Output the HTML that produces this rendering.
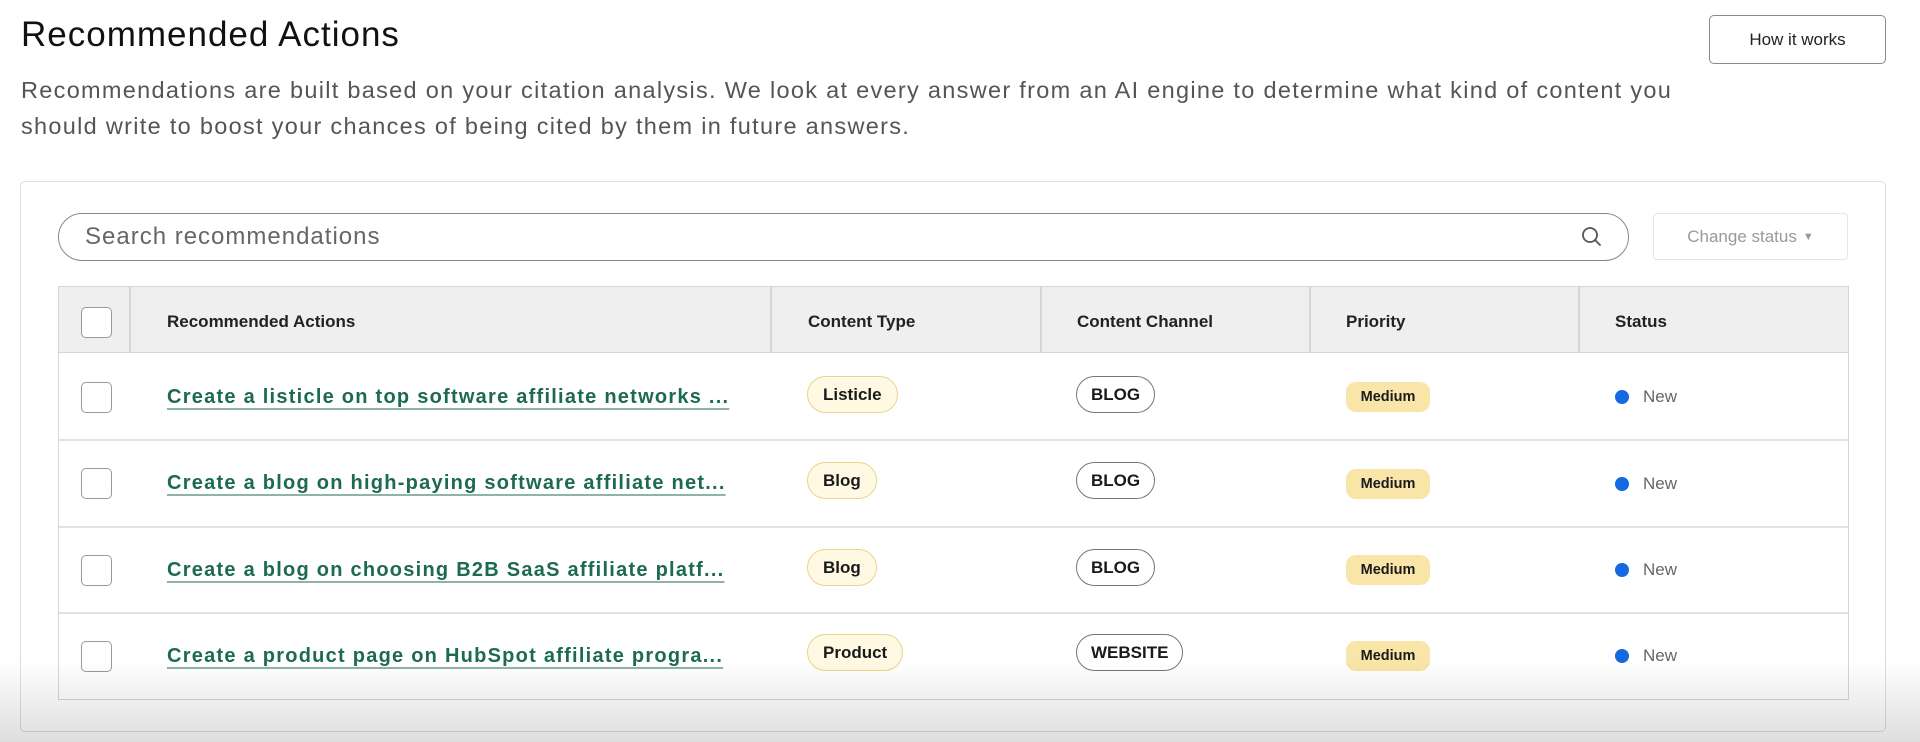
<!DOCTYPE html>
<html><head><meta charset="utf-8"><style>
*{box-sizing:border-box;margin:0;padding:0}
body{width:1920px;height:742px;overflow:hidden;background:#fff;font-family:"Liberation Sans",sans-serif;position:relative;color:#1a1a1a}
.abs{position:absolute}
h1{position:absolute;left:21px;top:15px;font-size:35px;font-weight:400;color:#111;letter-spacing:1px}
.p{position:absolute;left:21px;top:72px;font-size:23.5px;line-height:36px;color:#555;width:1780px;letter-spacing:1.3px;white-space:nowrap}
.btn{left:1709px;top:15px;width:177px;height:49px;border:1.5px solid #8a8a8a;border-radius:5px;font-size:17px;display:flex;align-items:center;justify-content:center;color:#222}
.panel{left:20px;top:181px;width:1866px;height:551px;border:1.5px solid #ddd;border-radius:5px}
.search{left:58px;top:213px;width:1571px;height:48px;border:1.5px solid #888;border-radius:24px;font-size:24px;color:#666;padding-left:26px;display:flex;align-items:center;letter-spacing:1px}
.cs{left:1653px;top:213px;width:195px;height:47px;border:1px solid #e6e6e6;border-radius:4px;font-size:17px;color:#999;display:flex;align-items:center;justify-content:center}
.table{left:58px;top:286px;width:1791px;height:414px;border:1.5px solid #d6d6d6}
.hdr{left:58px;top:286px;width:1791px;height:67px;background:#efefef;border:1.5px solid #d6d6d6}
.th{font-size:17px;font-weight:700;color:#222;top:312px}
.vl{width:1.5px;background:#d6d6d6;top:287px;height:66px}
.hl{left:59px;width:1789px;height:2px;background:#e2e2e2}
.cb{left:81px;width:31px;height:31px;border:1.5px solid #999;border-radius:5px;background:#fff}
.lnk{left:167px;font-size:20px;font-weight:700;color:#1d6a53;text-decoration:underline;text-decoration-color:#8fb3a6;text-underline-offset:5px;white-space:nowrap;letter-spacing:1.25px}
.ct{left:807px;height:37px;border:1.5px solid #e8d48a;background:#fff9e4;border-radius:19px;font-size:17px;font-weight:700;padding:0 15px;display:flex;align-items:center}
.ch{left:1076px;height:37px;border:1.5px solid #777;background:#fff;border-radius:19px;font-size:17px;font-weight:700;padding:0 14px;display:flex;align-items:center}
.pr{left:1346px;height:30px;width:84px;background:#fae5a8;border-radius:10px;font-size:14.5px;font-weight:700;display:flex;align-items:center;justify-content:center}
.dot{left:1615px;width:14px;height:14px;border-radius:50%;background:#1569e0}
.nw{left:1643px;font-size:17px;color:#666}
.shade{left:0;top:660px;width:1920px;height:82px;background:linear-gradient(to bottom,rgba(0,0,0,0),rgba(0,0,0,0.13));pointer-events:none}
</style></head><body>
<h1>Recommended Actions</h1>
<div class="p">Recommendations are built based on your citation analysis. We look at every answer from an AI engine to determine what kind of content you<br>should write to boost your chances of being cited by them in future answers.</div>
<div class="abs btn">How it works</div>
<div class="abs panel"></div>
<div class="abs search">Search recommendations</div>
<svg class="abs" style="left:1580px;top:225px" width="24" height="24" viewBox="0 0 24 24"><circle cx="10" cy="10" r="7" fill="none" stroke="#555" stroke-width="1.8"/><path d="M15 15l5 5" stroke="#555" stroke-width="1.8" stroke-linecap="round"/></svg>
<div class="abs cs">Change status <span style="font-size:11px;margin-left:6px">▼</span></div>
<div class="abs table"></div>
<div class="abs hdr"></div>
<div class="abs vl" style="left:129px"></div>
<div class="abs vl" style="left:770px"></div>
<div class="abs vl" style="left:1040px"></div>
<div class="abs vl" style="left:1309px"></div>
<div class="abs vl" style="left:1578px"></div>
<div class="abs cb" style="top:307px"></div>
<div class="abs th" style="left:167px">Recommended Actions</div>
<div class="abs th" style="left:808px">Content Type</div>
<div class="abs th" style="left:1077px">Content Channel</div>
<div class="abs th" style="left:1346px">Priority</div>
<div class="abs th" style="left:1615px">Status</div>
<div class="abs hl" style="top:439px"></div>
<div class="abs hl" style="top:526px"></div>
<div class="abs hl" style="top:612px"></div>

<div class="abs cb" style="top:382px"></div>
<div class="abs lnk" style="top:386px">Create a listicle on top software affiliate networks ...</div>
<div class="abs ct" style="top:376px">Listicle</div>
<div class="abs ch" style="top:376px">BLOG</div>
<div class="abs pr" style="top:382px">Medium</div>
<div class="abs dot" style="top:390px"></div>
<div class="abs nw" style="top:387px">New</div>

<div class="abs cb" style="top:468px"></div>
<div class="abs lnk" style="top:472px">Create a blog on high-paying software affiliate net...</div>
<div class="abs ct" style="top:462px">Blog</div>
<div class="abs ch" style="top:462px">BLOG</div>
<div class="abs pr" style="top:469px">Medium</div>
<div class="abs dot" style="top:477px"></div>
<div class="abs nw" style="top:474px">New</div>

<div class="abs cb" style="top:555px"></div>
<div class="abs lnk" style="top:559px">Create a blog on choosing B2B SaaS affiliate platf...</div>
<div class="abs ct" style="top:549px">Blog</div>
<div class="abs ch" style="top:549px">BLOG</div>
<div class="abs pr" style="top:555px">Medium</div>
<div class="abs dot" style="top:563px"></div>
<div class="abs nw" style="top:560px">New</div>

<div class="abs cb" style="top:641px"></div>
<div class="abs lnk" style="top:645px">Create a product page on HubSpot affiliate progra...</div>
<div class="abs ct" style="top:634px">Product</div>
<div class="abs ch" style="top:634px">WEBSITE</div>
<div class="abs pr" style="top:641px">Medium</div>
<div class="abs dot" style="top:649px"></div>
<div class="abs nw" style="top:646px">New</div>

<div class="abs shade"></div>
</body></html>
